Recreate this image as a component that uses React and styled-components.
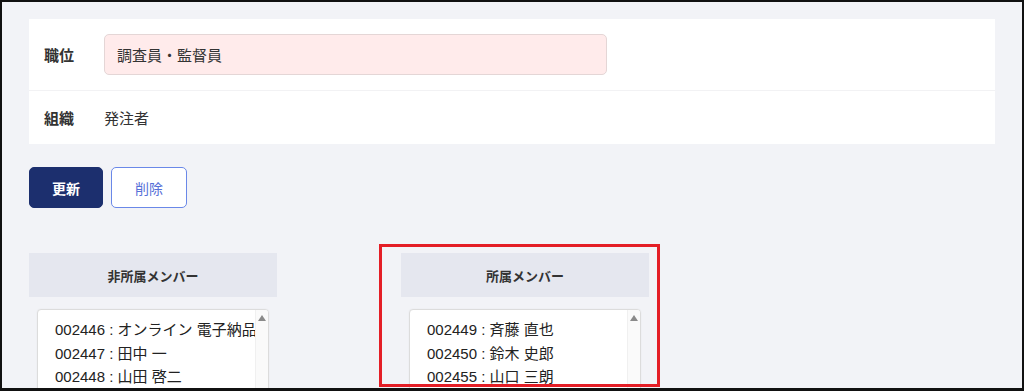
import React from "react";
import styled, { createGlobalStyle } from "styled-components";

const GlobalStyle = createGlobalStyle`
  html, body {
    margin: 0;
    padding: 0;
    background: #f2f3f7;
  }
  body {
    font-family: "Liberation Sans", "Noto Sans CJK JP", sans-serif;
    color: #222;
  }
`;

const Frame = styled.div`
  box-sizing: border-box;
  height: 391px;
  border: 2px solid #111;
  border-bottom-width: 3px;
  background: #f2f3f7;
  overflow: hidden;
`;

const Page = styled.div`
  padding: 17px 27px 0;
`;

const Card = styled.div`
  background: #fff;
`;

const Row = styled.div`
  display: flex;
  align-items: center;
  height: ${(p) => p.$height}px;
  border-bottom: ${(p) => (p.$divider ? "1px solid #f2f2f4" : "none")};
`;

const Label = styled.div`
  width: 60px;
  padding-left: 15px;
  font-family: "Noto Sans CJK JP", sans-serif;
  font-size: 15px;
  font-weight: 700;
  color: #333;
`;

const Value = styled.div`
  font-family: "Noto Sans CJK JP", sans-serif;
  font-size: 15px;
  color: #333;
`;

const Input = styled.div`
  box-sizing: border-box;
  width: 503px;
  height: 41px;
  display: flex;
  align-items: center;
  padding-left: 12px;
  background: #ffebeb;
  border: 1px solid #e4d6d6;
  border-radius: 5px;
  font-family: "Noto Sans CJK JP", sans-serif;
  font-size: 15px;
  color: #333;
`;

const Actions = styled.div`
  display: flex;
  gap: 8px;
  margin-top: 23px;
`;

const Button = styled.button`
  box-sizing: border-box;
  width: ${(p) => p.$width}px;
  height: 41px;
  border-radius: 5px;
  font-family: "Noto Sans CJK JP", sans-serif;
  font-size: 14px;
  font-weight: ${(p) => (p.$primary ? 700 : 400)};
  background: ${(p) => (p.$primary ? "#1c2f6e" : "#fff")};
  color: ${(p) => (p.$primary ? "#fff" : "#5670d8")};
  border: 1px solid ${(p) => (p.$primary ? "#1c2f6e" : "#6a88e8")};
  padding: 0;
`;

const Columns = styled.div`
  display: flex;
  gap: 124px;
  margin-top: 45px;
`;

const Column = styled.div`
  position: relative;
  width: 248px;
`;

const Highlight = styled.div`
  position: absolute;
  left: -22px;
  top: -9px;
  width: 281px;
  height: 143px;
  box-sizing: border-box;
  border: 3px solid #e41e26;
  pointer-events: none;
`;

const ColumnHeader = styled.div`
  height: 44px;
  display: flex;
  align-items: center;
  justify-content: center;
  background: #e5e7ef;
  font-family: "Noto Sans CJK JP", sans-serif;
  font-size: 13px;
  font-weight: 700;
  color: #333;
`;

const ListBox = styled.div`
  display: flex;
  margin: 12px 8px 0;
  height: 110px;
  background: #fff;
  border: 1px solid #dcdcdc;
  border-radius: 4px;
  box-shadow: 0 0 2px rgba(0, 0, 0, 0.06);
  overflow: hidden;
`;

const Options = styled.div`
  flex: 1;
  min-width: 0;
  overflow: hidden;
  padding: 8px 0 0 17px;
`;

const Option = styled.div`
  font-size: 15px;
  line-height: 23.5px;
  white-space: nowrap;
  color: #222;
`;

const ScrollTrack = styled.div`
  width: 12px;
  background: #fafafa;
  border-left: 1px solid #f0f0f0;
  display: flex;
  justify-content: center;
  padding-top: 5px;
`;

const Arrow = styled.div`
  width: 0;
  height: 0;
  border-left: 4.5px solid transparent;
  border-right: 4.5px solid transparent;
  border-bottom: 6px solid #8a8a8a;
`;

const MemberList = ({ items }) => (
  <ListBox>
    <Options>
      {items.map((m) => (
        <Option key={m}>{m}</Option>
      ))}
    </Options>
    <ScrollTrack>
      <Arrow />
    </ScrollTrack>
  </ListBox>
);

const outsiders = [
  "002446 : オンライン 電子納品",
  "002447 : 田中 一",
  "002448 : 山田 啓二",
];

const members = [
  "002449 : 斉藤 直也",
  "002450 : 鈴木 史郎",
  "002455 : 山口 三朗",
];

export default function App() {
  return (
    <Frame>
      <GlobalStyle />
      <Page>
        <Card>
          <Row $height={71} $divider>
            <Label>職位</Label>
            <Input>調査員・監督員</Input>
          </Row>
          <Row $height={53}>
            <Label>組織</Label>
            <Value>発注者</Value>
          </Row>
        </Card>
        <Actions>
          <Button $primary $width={74}>更新</Button>
          <Button $width={76}>削除</Button>
        </Actions>
        <Columns>
          <Column>
            <ColumnHeader>非所属メンバー</ColumnHeader>
            <MemberList items={outsiders} />
          </Column>
          <Column>
            <ColumnHeader>所属メンバー</ColumnHeader>
            <MemberList items={members} />
            <Highlight />
          </Column>
        </Columns>
      </Page>
    </Frame>
  );
}
